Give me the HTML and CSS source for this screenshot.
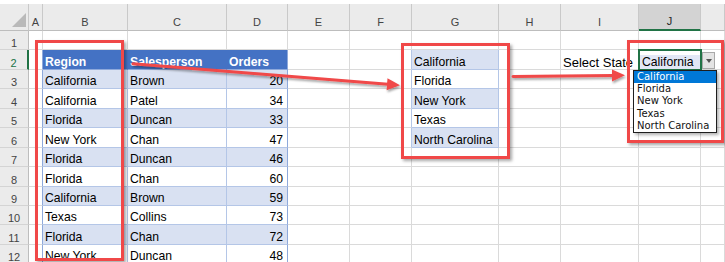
FILE: index.html
```html
<!DOCTYPE html>
<html>
<head>
<meta charset="utf-8">
<link rel="stylesheet" href="styles.css">
</head>
<body>
<div class="page">
  <div class="sheet">
    <div class="row">
      <div class="c ch corner"></div>
      <div class="c ch">A</div>
      <div class="c ch">B</div>
      <div class="c ch">C</div>
      <div class="c ch">D</div>
      <div class="c ch">E</div>
      <div class="c ch">F</div>
      <div class="c ch">G</div>
      <div class="c ch">H</div>
      <div class="c ch">I</div>
      <div class="c ch selcol">J</div>
      <div class="c ch"></div>
    </div>
    <div class="row">
      <div class="c rh">1</div>
      <div class="c"></div><div class="c"></div><div class="c"></div><div class="c"></div><div class="c"></div>
      <div class="c"></div><div class="c"></div><div class="c"></div><div class="c"></div><div class="c"></div><div class="c"></div>
    </div>
    <div class="row">
      <div class="c rh selrow">2</div>
      <div class="c edge"></div>
      <div class="c th">Region</div>
      <div class="c th">Salesperson</div>
      <div class="c th last">Orders</div>
      <div class="c"></div>
      <div class="c ledge"></div>
      <div class="c band">California</div>
      <div class="c"></div>
      <div class="c label">Select State</div>
      <div class="c selcell"><span class="seltext">California</span><span class="ddbtn"><span class="tri"></span></span></div>
      <div class="c"></div>
    </div>
    <div class="row">
      <div class="c rh">3</div>
      <div class="c edge"></div>
      <div class="c band">California</div>
      <div class="c band">Brown</div>
      <div class="c band n last">20</div>
      <div class="c"></div>
      <div class="c ledge"></div>
      <div class="c wt">Florida</div>
      <div class="c"></div><div class="c"></div><div class="c"></div><div class="c"></div>
    </div>
    <div class="row">
      <div class="c rh">4</div>
      <div class="c edge"></div>
      <div class="c wt">California</div>
      <div class="c wt">Patel</div>
      <div class="c wt n last">34</div>
      <div class="c"></div>
      <div class="c ledge"></div>
      <div class="c band">New York</div>
      <div class="c"></div><div class="c"></div><div class="c"></div><div class="c"></div>
    </div>
    <div class="row">
      <div class="c rh">5</div>
      <div class="c edge"></div>
      <div class="c band">Florida</div>
      <div class="c band">Duncan</div>
      <div class="c band n last">33</div>
      <div class="c"></div>
      <div class="c ledge"></div>
      <div class="c wt">Texas</div>
      <div class="c"></div><div class="c"></div><div class="c"></div><div class="c"></div>
    </div>
    <div class="row">
      <div class="c rh">6</div>
      <div class="c edge"></div>
      <div class="c wt">New York</div>
      <div class="c wt">Chan</div>
      <div class="c wt n last">47</div>
      <div class="c"></div>
      <div class="c ledge"></div>
      <div class="c band">North Carolina</div>
      <div class="c"></div><div class="c"></div><div class="c"></div><div class="c"></div>
    </div>
    <div class="row">
      <div class="c rh">7</div>
      <div class="c edge"></div>
      <div class="c band">Florida</div>
      <div class="c band">Duncan</div>
      <div class="c band n last">46</div>
      <div class="c"></div><div class="c"></div><div class="c"></div><div class="c"></div><div class="c"></div><div class="c"></div><div class="c"></div>
    </div>
    <div class="row">
      <div class="c rh">8</div>
      <div class="c edge"></div>
      <div class="c wt">Florida</div>
      <div class="c wt">Chan</div>
      <div class="c wt n last">60</div>
      <div class="c"></div><div class="c"></div><div class="c"></div><div class="c"></div><div class="c"></div><div class="c"></div><div class="c"></div>
    </div>
    <div class="row">
      <div class="c rh">9</div>
      <div class="c edge"></div>
      <div class="c band">California</div>
      <div class="c band">Brown</div>
      <div class="c band n last">59</div>
      <div class="c"></div><div class="c"></div><div class="c"></div><div class="c"></div><div class="c"></div><div class="c"></div><div class="c"></div>
    </div>
    <div class="row">
      <div class="c rh">10</div>
      <div class="c edge"></div>
      <div class="c wt">Texas</div>
      <div class="c wt">Collins</div>
      <div class="c wt n last">73</div>
      <div class="c"></div><div class="c"></div><div class="c"></div><div class="c"></div><div class="c"></div><div class="c"></div><div class="c"></div>
    </div>
    <div class="row">
      <div class="c rh">11</div>
      <div class="c edge"></div>
      <div class="c band">Florida</div>
      <div class="c band">Chan</div>
      <div class="c band n last">72</div>
      <div class="c"></div><div class="c"></div><div class="c"></div><div class="c"></div><div class="c"></div><div class="c"></div><div class="c"></div>
    </div>
    <div class="row">
      <div class="c rh">12</div>
      <div class="c edge"></div>
      <div class="c wt">New York</div>
      <div class="c wt">Duncan</div>
      <div class="c wt n last">48</div>
      <div class="c"></div><div class="c"></div><div class="c"></div><div class="c"></div><div class="c"></div><div class="c"></div><div class="c"></div>
    </div>
  </div>

  <ul class="ddlist">
    <li class="on">California</li>
    <li>Florida</li>
    <li>New York</li>
    <li>Texas</li>
    <li>North Carolina</li>
  </ul>

  <div class="mark m1"></div>
  <div class="mark m2"></div>
  <div class="mark m3"></div>

  <svg class="arrows" width="725" height="262" viewBox="0 0 725 262">
    <defs>
      <filter id="sh" x="-20%" y="-100%" width="140%" height="300%">
        <feDropShadow dx="1" dy="2" stdDeviation="1.2" flood-color="#000" flood-opacity="0.35"/>
      </filter>
    </defs>
    <g filter="url(#sh)">
      <line x1="133" y1="63.8" x2="388" y2="84.3" stroke="#f04848" stroke-width="3" stroke-linecap="round"/>
      <polygon fill="#f04848" points="400,85.3 386.6,90.3 387.5,78.3"/>
    </g>
    <g filter="url(#sh)">
      <line x1="513" y1="76.6" x2="613" y2="75.45" stroke="#f04848" stroke-width="3" stroke-linecap="round"/>
      <polygon fill="#f04848" points="625,75.3 612,81.5 612,69.4"/>
    </g>
  </svg>
</div>
</body>
</html>
```

FILE: styles.css
```css
* { box-sizing: border-box; margin: 0; padding: 0; }
html, body { background: #fff; overflow: hidden; }
body { width: 725px; height: 262px; font-family: "Liberation Sans", Arial, sans-serif; }

.page { position: relative; width: 725px; height: 262px; padding-top: 4px; overflow: hidden; }

.sheet {
  display: grid;
  grid-template-columns: 29px 14px 85px 99px 61px 62px 62px 87px 62px 78px 62px 1fr;
  grid-template-rows: 27px 19px 20px 19px 20px 19px 20px 19px 20px 19px 19px 20px 19px;
}
.row { display: contents; }

.c {
  border-right: 1px solid #dadada;
  border-bottom: 1px solid #dadada;
  font-size: 12.2px;
  line-height: 13px;
  color: #000;
  display: flex;
  align-items: flex-end;
  padding: 0 2px;
  white-space: nowrap;
}
.label { font-size: 13px; }

.ch {
  background: #ebebeb;
  border-right-color: #c9c9c9;
  border-bottom-color: #bdbdbd;
  justify-content: center;
  font-size: 11px;
  line-height: 12px;
  padding-bottom: 2px;
  color: #444;
}
.corner { position: relative; }
.corner::after {
  content: "";
  position: absolute;
  right: 2px;
  bottom: 3px;
  width: 14px;
  height: 14px;
  background: #b9b9b9;
  clip-path: polygon(100% 0, 100% 100%, 0 100%);
}
.selcol { background: #d3d3d3; border-bottom: 2px solid #217346; color: #262626; }

.rh {
  background: #ebebeb;
  border-right-color: #bdbdbd;
  border-bottom-color: #d4d4d4;
  justify-content: center;
  font-size: 11px;
  line-height: 12px;
  color: #444;
}
.selrow { color: #217346; border-right: 2px solid #217346; }

.edge { border-right-color: #8ea9db; }
.ledge { border-right-color: #b4c6e7; }

.th {
  background: #4472c4;
  color: #fff;
  font-weight: bold;
  border-right-color: #4472c4;
  border-bottom-color: #8ea9db;
}
.band { background: #d9e1f2; border-right-color: #b4c6e7; border-bottom-color: #b4c6e7; }
.wt { background: #fff; border-right-color: #b4c6e7; border-bottom-color: #b4c6e7; }
.last { border-right-color: #8ea9db; }
.n { justify-content: flex-end; padding-right: 4px; }

.selcell {
  position: relative;
  outline: 2px solid #217346;
  outline-offset: -1px;
  padding: 0 0 0 1px;
}
.seltext { display: block; width: 100%; padding: 0 0 0 2px; background: #e2e7f6; line-height: 14px; }
.ddbtn {
  position: absolute;
  left: 63px;
  top: 2px;
  width: 13px;
  height: 17px;
  background: #e4e4e4;
  border: 1px solid #a9a9a9;
  display: flex;
  align-items: center;
  justify-content: center;
}
.tri {
  width: 0;
  height: 0;
  border-left: 3.5px solid transparent;
  border-right: 3.5px solid transparent;
  border-top: 4px solid #555;
}

.ddlist {
  position: absolute;
  left: 633px;
  top: 70px;
  width: 84px;
  height: 63px;
  list-style: none;
  background: #fff;
  border: 1px solid #1e1e1e;
  box-shadow: 2px 2px 3px rgba(0, 0, 0, 0.3);
  font-family: "DejaVu Sans", "Noto Sans", sans-serif;
  font-size: 10px;
  line-height: 12.2px;
  color: #111;
}
.ddlist li { padding-left: 3px; white-space: nowrap; }
.ddlist li.on { background: #0078d7; color: #fff; }

.mark {
  position: absolute;
  border: 3px solid #f04848;
  box-shadow: 2px 2px 3px rgba(0, 0, 0, 0.35);
}
.m1 { left: 35px; top: 40px; width: 89px; height: 221px; }
.m2 { left: 401px; top: 43px; width: 109px; height: 116px; }
.m3 { left: 627px; top: 40px; width: 97px; height: 103px; }

.arrows { position: absolute; left: 0; top: 0; pointer-events: none; }
```
